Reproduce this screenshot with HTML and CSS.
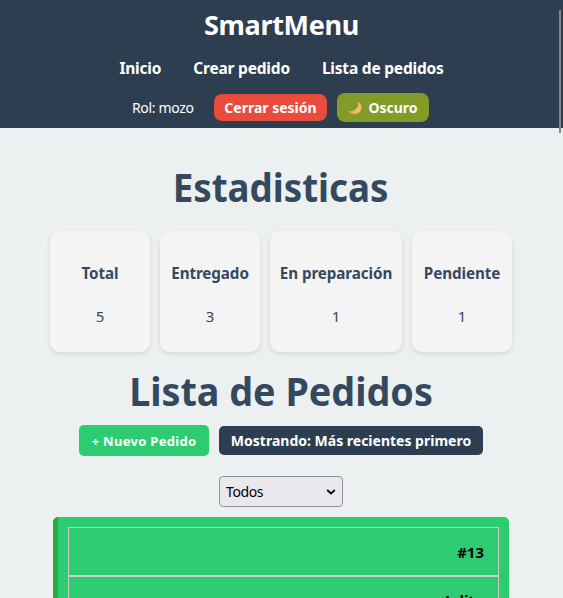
FILE: index.html
```html
<!DOCTYPE html>
<html lang="es">
<head>
<meta charset="utf-8">
<title>SmartMenu</title>
<link rel="stylesheet" href="styles.css">
</head>
<body>
<header class="header">
  <div class="brand">SmartMenu</div>
  <nav class="nav"><a>Inicio</a><a>Crear pedido</a><a>Lista de pedidos</a></nav>
  <div class="session">
    <span class="role">Rol: mozo</span>
    <button class="logout">Cerrar sesión</button>
    <button class="theme"><svg width="14" height="14" viewBox="0 0 14 14"><defs><linearGradient id="moon" x1="0" y1="1" x2="1" y2="0"><stop offset="0" stop-color="#f08a4b"/><stop offset=".5" stop-color="#f6c077"/><stop offset="1" stop-color="#efb45c"/></linearGradient></defs><path d="M9.600 .5C13 2 14.400 5.800 12.900 9.200C11.200 13 6.900 14.300 3.300 12.600C1.900 12 .900 11 .2 9.800C3.300 10.800 6.600 9.900 8.500 7.600C10.200 5.500 10.500 2.900 9.600 .5Z" fill="url(#moon)"/></svg><span>Oscuro</span></button>
  </div>
</header>
<main class="main">
  <h1 class="title stats-title">Estadisticas</h1>
  <section class="stats">
    <article class="stat"><h3>Total</h3><p>5</p></article>
    <article class="stat"><h3>Entregado</h3><p>3</p></article>
    <article class="stat wide"><h3>En preparación</h3><p>1</p></article>
    <article class="stat"><h3>Pendiente</h3><p>1</p></article>
  </section>
  <h1 class="title list-title">Lista de Pedidos</h1>
  <div class="actions"><button class="new">+ Nuevo Pedido</button><button class="order">Mostrando: Más recientes primero</button></div>
  <div class="filter"><span>Todos</span><svg width="10" height="6" viewBox="0 0 10 6"><path d="M1.200 1L5 4.500L8.800 1" fill="none" stroke="#000" stroke-width="1.700"/></svg></div>
  <section class="card">
    <div class="cell">#13</div>
    <div class="cell second">Julito</div>
  </section>
</main>
<div class="scrollbar"></div>
</body>
</html>
```
FILE: styles.css
```css
* { box-sizing: border-box; }
html { height: 598px; overflow: hidden; }
body { margin: 0; height: 598px; overflow: hidden; background: #ecf0f1; color: #34495e; font-family: "Noto Sans", "Open Sans", sans-serif; font-size: 16px; }
button { border: 0; padding: 0; font: inherit; font-weight: 700; color: #fff; white-space: nowrap; }
.header { height: 128px; background: #2c3e50; color: #fff; display: flex; flex-direction: column; align-items: center; }
.brand { height: 51px; line-height: 49px; font-size: 27px; font-weight: 700; letter-spacing: -.3px; }
.nav { display: flex; gap: 32px; height: 36px; line-height: 34px; font-size: 15.500px; letter-spacing: -.2px; font-weight: 700; white-space: nowrap; }
.session { display: flex; align-items: center; height: 41px; padding-right: 2px; }
.role { font-size: 14px; width: 82px; letter-spacing: -.35px; white-space: nowrap; }
.logout { width: 113px; height: 27px; background: #e74c3c; border-radius: 8px; font-size: 14px; }
.theme { width: 92px; height: 29px; margin-left: 10px; background: #839b27; border-radius: 8px; font-size: 14px; display: flex; align-items: center; justify-content: center; gap: 6px; }
.main { width: 562px; height: 470px; overflow: hidden; display: flex; flex-direction: column; align-items: center; }
.main > * { flex-shrink: 0; }
.title { margin: 0; font-size: 40px; line-height: 50px; font-weight: 700; white-space: nowrap; }
.stats-title { padding-top: 34px; transform: scaleX(.918); }
.stats { display: flex; gap: 10px; margin-top: 19px; }
.stat { width: 100px; height: 121px; background: #f4f4f4; border-radius: 10px; box-shadow: 0 2px 5px rgba(0,0,0,.1); text-align: center; padding-top: 31px; }
.stat.wide { width: 132px; }
.stat h3 { margin: 0 0 21px; font-size: 15.200px; letter-spacing: -.08px; line-height: 22px; white-space: nowrap; }
.stat p { margin: 0; font-size: 15px; line-height: 22px; }
.list-title { margin-top: 14px; transform: scaleX(.943); }
.actions { display: flex; align-items: center; gap: 10px; height: 31px; margin-top: 9px; }
.new { width: 130px; height: 31px; background: #2ecc71; border-radius: 5px; font-size: 13px; letter-spacing: .3px; }
.order { width: 264px; height: 29px; background: #2c3e50; border-radius: 5px; font-size: 14px; }
.filter { width: 124px; height: 31px; margin-top: 20px; padding: 0 6px; border: 1px solid #8f8f9d; border-radius: 4px; background: #e9e9ed; color: #000; font-size: 14px; letter-spacing: -.4px; display: flex; align-items: center; justify-content: space-between; }
.card { width: 456px; height: 81px; margin-top: 10px; padding: 10px 10px 0; border-left: 5px solid #28a745; border-radius: 5px 5px 0 0; background: #2ecc71; color: #000; overflow: hidden; }
.cell { height: 49px; line-height: 48px; border: 1px solid #ccc; padding-right: 14px; text-align: right; font-size: 15px; font-weight: 700; }
.second { line-height: 47px; letter-spacing: -.1px; }
.scrollbar { position: absolute; right: 2px; top: 10px; width: 2px; height: 123px; background: #858585; }
```
